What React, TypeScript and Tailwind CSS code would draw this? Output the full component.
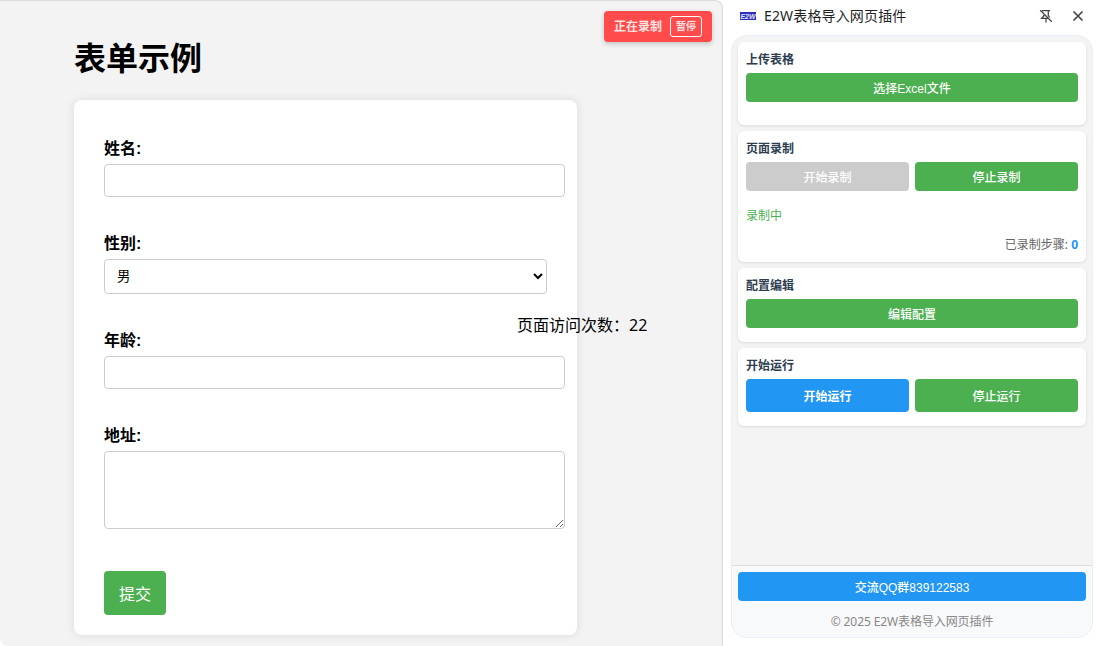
import { useState } from "react";
import type { ReactNode } from "react";

const fields = [
  { label: "姓名:", type: "text" },
  { label: "性别:", type: "select" },
  { label: "年龄:", type: "text" },
  { label: "地址:", type: "textarea" },
];

type CardProps = {
  title: string;
  className: string;
  children: ReactNode;
};

const Card: React.FC<CardProps> = ({ title, className, children }) => {
  return (
    <section
      className={`rounded-md bg-white px-2 pt-2 shadow-[0_1px_3px_rgba(0,0,0,0.1)] ${className}`}
    >
      <h2 className="mb-1 h-[19px] text-xs leading-[19px] font-bold text-[#2c3e50]">
        {title}
      </h2>
      {children}
    </section>
  );
};

const PanelButton: React.FC<{ label: string; className: string }> = ({
  label,
  className,
}) => {
  return (
    <button
      className={`flex flex-1 items-center justify-center rounded pt-[3px] font-['Liberation_Sans','Noto_Sans_CJK_SC',sans-serif] text-xs text-white ${className}`}
    >
      {label}
    </button>
  );
};

const FormPage = () => {
  const [gender, setGender] = useState("男");

  return (
    <main className="relative w-[723px] overflow-hidden rounded-tr-lg rounded-bl-lg border-t border-r border-[#dcdcdc] bg-[#f3f3f3] pl-[74px] font-['Liberation_Sans','Noto_Sans_CJK_SC',sans-serif] text-black">
      <h1 className="mt-[34px] h-12 pt-px text-[32px] leading-[46px] font-bold">
        表单示例
      </h1>
      <form className="mt-[17px] h-[535px] w-[503px] rounded-lg bg-white px-[30px] pt-9 shadow-[0_0_10px_rgba(0,0,0,0.1)]">
        {fields.map((field) => (
          <div key={field.label} className="mb-[34px]">
            <label className="mb-1 block h-6 pt-px text-base leading-6 font-bold">
              {field.label}
            </label>
            {field.type === "text" && (
              <input
                type="text"
                className="block h-[33px] w-[461px] rounded border border-[#ccc] px-2"
              />
            )}
            {field.type === "select" && (
              <select
                value={gender}
                onChange={(e) => setGender(e.target.value)}
                className="block h-[35px] w-[443px] rounded border border-[#ccc] bg-white px-2 text-[13.333px]"
              >
                <option>男</option>
                <option>女</option>
              </select>
            )}
            {field.type === "textarea" && (
              <textarea className="block h-[78px] w-[461px] resize rounded border border-[#ccc] p-2" />
            )}
          </div>
        ))}
        <button
          type="button"
          className="mt-2 h-11 w-[62px] rounded bg-[#4caf50] pt-[3px] text-base text-white"
        >
          提交
        </button>
      </form>

      <div className="absolute top-[312px] left-[517px] font-['Noto_Sans','Noto_Sans_CJK_SC',sans-serif] text-base leading-6 whitespace-nowrap">
        页面访问次数：22
      </div>

      {/* recording badge */}
      <div className="absolute top-[10px] right-[10px] flex h-[31px] w-[108px] items-center gap-2 rounded bg-[#ff4b4b] pl-[10px] text-xs font-bold text-white/85 shadow-[0_2px_5px_rgba(0,0,0,0.2)]">
        <span>正在录制</span>
        <button className="h-[21px] w-8 rounded-[3px] border border-white pt-px text-[10px] font-bold">
          暂停
        </button>
      </div>
    </main>
  );
};

const SidePanel = () => {
  return (
    <aside className="flex h-full w-[373px] flex-col bg-white pl-2 font-['Noto_Sans','Noto_Sans_CJK_SC',sans-serif]">
      <header className="flex h-[35px] items-center pb-[3px] pl-[9px]">
        <svg width="16" height="8" viewBox="0 0 16 8" className="mr-2">
          <rect width="16" height="8" fill="#2b2fbd" />
          <text
            x="0.5"
            y="6.8"
            fill="#e4e4ff"
            fontFamily="Liberation Sans"
            fontSize="7.5"
            fontWeight="bold"
            fontStyle="italic"
            textLength="15"
            lengthAdjust="spacingAndGlyphs"
          >
            E2W
          </text>
        </svg>
        <span className="text-sm tracking-[0.15px] text-[#1f1f1f]">
          E2W表格导入网页插件
        </span>
        <svg
          width="16"
          height="16"
          viewBox="0 0 16 16"
          fill="none"
          stroke="#474747"
          strokeWidth="1.3"
          className="ml-auto"
        >
          <path d="M4 2.6h8M5.7 4.8v3.5l-2 2h6.8M10.3 2.6v5l1.4 1.7M8 10.3v4.2M2.2 2.2l11.6 11.6" />
        </svg>
        <svg
          width="12"
          height="12"
          viewBox="0 0 12 12"
          stroke="#474747"
          strokeWidth="1.7"
          className="mr-3 ml-[18px]"
        >
          <path d="M1.5 1.5l9 9M10.5 1.5l-9 9" />
        </svg>
      </header>

      <div className="flex h-[603px] w-[362px] flex-col overflow-hidden rounded-2xl border border-[#e9eff8] bg-[#f4f4f4]">
        <div className="flex flex-1 flex-col gap-[6px] px-[6px] pt-[6px]">
          <Card title="上传表格" className="h-[83px]">
            <div className="flex">
              <PanelButton label="选择Excel文件" className="h-[29px] bg-[#4caf50] font-medium" />
            </div>
          </Card>

          <Card title="页面录制" className="h-[131px]">
            <div className="flex gap-[6px]">
              <PanelButton label="开始录制" className="h-[29px] bg-[#ccc] font-medium" />
              <PanelButton label="停止录制" className="h-[29px] bg-[#4caf50] font-medium" />
            </div>
            <p className="mt-[15px] text-xs leading-[19px] text-[#4caf50]">
              录制中
            </p>
            <p className="mt-[10px] text-right text-xs leading-[19px] text-[#666]">
              已录制步骤: <span className="font-bold text-[#2196f3]">0</span>
            </p>
          </Card>

          <Card title="配置编辑" className="h-[74px]">
            <div className="flex">
              <PanelButton label="编辑配置" className="h-[29px] bg-[#4caf50] font-medium" />
            </div>
          </Card>

          <Card title="开始运行" className="h-[78px]">
            <div className="flex gap-[6px]">
              <PanelButton label="开始运行" className="h-[33px] bg-[#2196f3] font-bold" />
              <PanelButton label="停止运行" className="h-[33px] bg-[#4caf50] font-medium" />
            </div>
          </Card>
        </div>

        <footer className="h-[72px] border-t border-[#ddd] bg-[#f8f9fa] px-[6px] pt-[6px]">
          <div className="flex">
            <PanelButton label="交流QQ群839122583" className="h-[29px] bg-[#2196f3] font-medium" />
          </div>
          <p className="mt-[11px] text-center text-xs leading-[19px] tracking-[-0.1px] text-[#888]">
            © 2025 E2W表格导入网页插件
          </p>
        </footer>
      </div>
    </aside>
  );
};

export default function App() {
  return (
    <div className="flex h-[646px] w-[1096px] overflow-hidden bg-white">
      <FormPage />
      <SidePanel />
    </div>
  );
}
